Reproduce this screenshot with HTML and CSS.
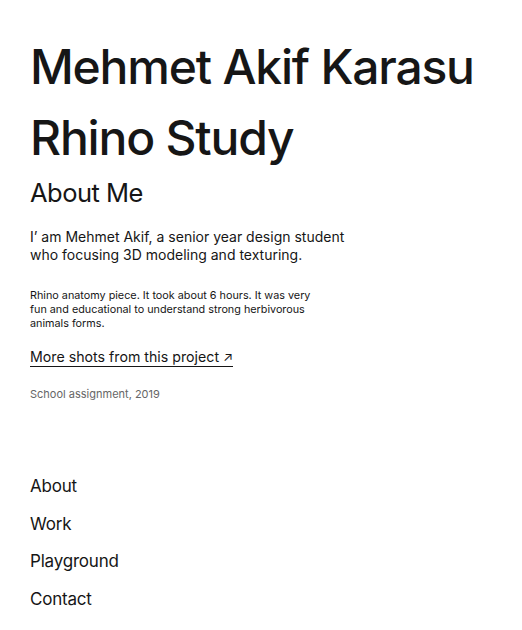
FILE: index.html
```html
<!DOCTYPE html>
<html lang="en">
<head>
<meta charset="utf-8">
<title>Rhino Study</title>
<link rel="stylesheet" href="styles.css">
</head>
<body>
<main class="page">
  <h1 class="title">Mehmet Akif Karasu<br>Rhino Study</h1>
  <h2 class="subtitle">About Me</h2>
  <p class="intro">I’ am Mehmet Akif, a senior year design student<br>who focusing 3D modeling and texturing.</p>
  <p class="desc">Rhino anatomy piece. It took about 6 hours. It was very<br>fun and educational to understand strong herbivorous<br>animals forms.</p>
  <a class="more" href="#">More shots from this project <span class="arrow">↗</span></a>
  <p class="meta">School assignment, 2019</p>
  <nav class="nav">
    <a href="#">About</a>
    <a href="#">Work</a>
    <a href="#">Playground</a>
    <a href="#">Contact</a>
  </nav>
</main>
</body>
</html>
```
FILE: styles.css
```css
* { box-sizing: border-box; }
html, body { margin: 0; padding: 0; background: #fff; }
body { font-family: Inter, "Liberation Sans", sans-serif; color: #161616; }
.page { padding: 30px 30px 0 30px; display: flex; flex-direction: column; align-items: flex-start; }
.title {
  margin: 1px 0 0;
  font-family: Inter, "Liberation Sans", sans-serif;
  font-weight: 500;
  font-size: 48px;
  line-height: 71px;
  letter-spacing: -1.2px;
}
.subtitle {
  margin: 2px 0 0;
  font-weight: 400;
  font-size: 25.5px;
  line-height: 36px;
  letter-spacing: -0.5px;
}
.intro { margin: 17px 0 0; font-size: 14px; line-height: 18px; }
.desc { margin: 25px 0 0; font-size: 10.8px; line-height: 14px; }
.more {
  margin-top: 17px;
  font-size: 14.2px; line-height: 18px;
  color: #161616; text-decoration: none;
  border-bottom: 1px solid #161616;
}
.arrow { font-size: 13px; }
.meta { margin: 20px 0 0; font-size: 11px; color: #666; }
.nav { margin-top: 74px; display: flex; flex-direction: column; gap: 15.5px; }
.nav a { font-size: 17px; line-height: 22px; color: #161616; text-decoration: none; letter-spacing: -0.2px; }
```
